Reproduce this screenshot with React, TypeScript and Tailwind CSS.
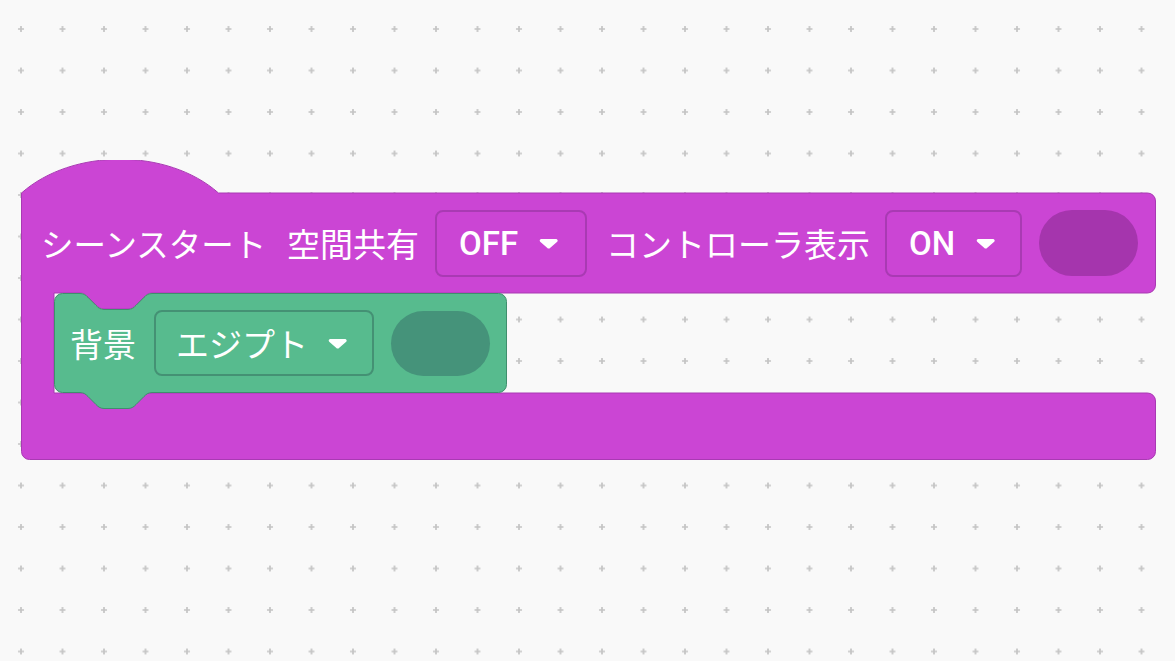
import React from 'react';

const jp = { fontFamily: '"Noto Sans CJK JP", "Noto Sans", sans-serif' };
const latin = { fontFamily: 'Roboto, "Liberation Sans", "Noto Sans CJK JP", sans-serif' };

// Scratch-style notch, scale 2 (72 wide, 16 deep)
const NOTCH_R = 'c 4,0 6,2 8,4 l 8,8 c 2,2 4,4 8,4 h 24 c 4,0 6,-2 8,-4 l 8,-8 c 2,-2 4,-4 8,-4';
const NOTCH_L = 'c -4,0 -6,2 -8,4 l -8,8 c -2,2 -4,4 -8,4 h -24 c -4,0 -6,-2 -8,-4 l -8,-8 c -2,-2 -4,-4 -8,-4';

const Caret = () => (
  <svg width="19" height="11" viewBox="0 0 19 11" className="shrink-0">
    <path d="M2 1 h15 a1.6 1.6 0 0 1 1.2 2.7 l-6.9 6 a2.2 2.2 0 0 1 -3.2 0 l-6.9 -6 A1.6 1.6 0 0 1 2 1z" fill="#ffffff" />
  </svg>
);

const GridBackground = () => (
  <svg className="absolute inset-0" width="1175" height="661">
    <defs>
      <pattern id="dots" x="0.25" y="8.25" width="41.5" height="41.5" patternUnits="userSpaceOnUse">
        <path d="M17.75 20.75 h6 M20.75 17.75 v6" stroke="#c4c4c4" strokeWidth="1.7" />
      </pattern>
    </defs>
    <rect width="1175" height="661" fill="url(#dots)" />
  </svg>
);

const BackdropBlock = () => (
  <div className="relative w-[453px] h-[100px] flex items-center pl-[16px]">
    <svg className="absolute left-0 top-0 overflow-visible" width="453" height="116">
      <path
        d={`M0.5,8.5 a8,8 0 0 1 8,-8 H26 ${NOTCH_R} H444.5 a8,8 0 0 1 8,8 V91.5 a8,8 0 0 1 -8,8 H98 ${NOTCH_L} H8.5 a8,8 0 0 1 -8,-8 Z`}
        fill="#57bb8e"
        stroke="#3f8f6d"
        strokeWidth="1"
      />
    </svg>
    <span className="relative w-[66px] text-[33px] leading-none text-white" style={jp}>背景</span>
    <div className="relative ml-[18px] w-[220px] h-[66px] rounded-[8px] border-2 border-[#449174] flex items-center justify-between pl-[20px] pr-[25px]">
      <span className="text-[33px] leading-none text-white" style={jp}>エジプト</span>
      <Caret />
    </div>
    <div className="relative ml-[17px] w-[99px] h-[65px] rounded-full bg-[#45937a]" />
  </div>
);

export default function App() {
  return (
    <div className="relative w-[1175px] h-[661px] overflow-hidden bg-[#f9f9f9]">
      <GridBackground />

      {/* scene start hat block */}
      <div className="absolute left-[21px] top-[160px] w-[1135px] h-[300px]">
        <svg className="absolute left-0 top-0" width="1136" height="301">
          <path
            d={`M0.5,33 c 51,-45 146,-45 197,0 H1126.5 a8,8 0 0 1 8,8 V125 a8,8 0 0 1 -8,8 H131 ${NOTCH_L} H33 V233 H1126.5 a8,8 0 0 1 8,8 V291.5 a8,8 0 0 1 -8,8 H8.5 a8,8 0 0 1 -8,-8 Z`}
            fill="#cb45d4"
            stroke="#a93ab3"
            strokeWidth="1"
          />
        </svg>

        <div className="relative flex flex-col pt-[33px]">
          <div className="h-[100px] flex items-center pl-[20px] text-white">
            <span className="w-[226px] shrink-0 whitespace-nowrap text-[32.5px] leading-none" style={jp}>シーンスタート</span>
            <span className="ml-[20px] w-[132px] shrink-0 whitespace-nowrap text-[33px] leading-none" style={jp}>空間共有</span>
            <div className="ml-[16px] w-[152px] h-[67px] shrink-0 rounded-[8px] border-2 border-[#a93ab3] flex items-center justify-between pl-[22px] pr-[27px]">
              <span className="text-[33px] leading-none font-medium" style={latin}>OFF</span>
              <Caret />
            </div>
            <span className="ml-[19px] w-[264px] shrink-0 whitespace-nowrap text-[33px] leading-none" style={jp}>コントローラ表示</span>
            <div className="ml-[15px] w-[137px] h-[67px] shrink-0 rounded-[8px] border-2 border-[#a93ab3] flex items-center justify-between pl-[22px] pr-[25px]">
              <span className="text-[33px] leading-none font-medium" style={latin}>ON</span>
              <Caret />
            </div>
            <div className="ml-[17px] w-[99px] h-[66px] shrink-0 rounded-full bg-[#a535ad]" />
          </div>

          <div className="h-[100px] pl-[33px]">
            <BackdropBlock />
          </div>

          <div className="h-[67px]" />
        </div>
      </div>
    </div>
  );
}
